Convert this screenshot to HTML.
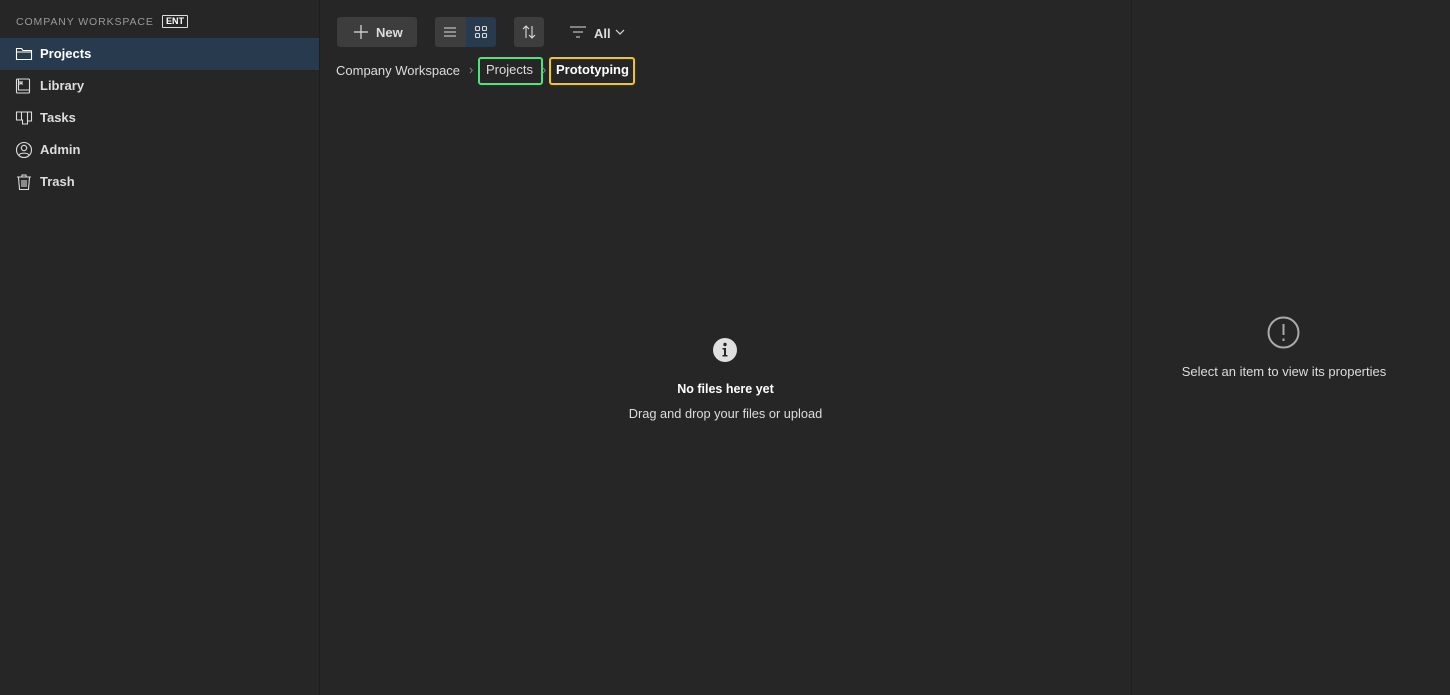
<!DOCTYPE html>
<html><head><style>
*{box-sizing:border-box;margin:0;padding:0}
body{width:1450px;height:695px;background:#262626;font-family:"Liberation Sans",sans-serif;color:#e6e6e6;position:relative;overflow:hidden}
.side{position:absolute;left:0;top:0;width:320px;height:695px;border-right:1px solid #1e1e1e;background:#262626}
.ws{position:absolute;left:16px;top:16px;font-size:10.5px;letter-spacing:0.9px;color:#9a9a9a}
.ent{position:absolute;left:162px;top:15px;border:1px solid #ddd;font-size:9px;font-weight:bold;color:#fff;padding:0 3px;line-height:11px;border-radius:1px}
.item{position:absolute;left:0;width:319px;height:32px;font-size:13px;font-weight:bold;color:#ddd}
.item span{position:absolute;left:40px;top:8px}
.item svg{position:absolute;left:15px;top:7px}
.act{background:#283a4d;color:#fff}
.right{position:absolute;left:1131px;top:0;width:319px;height:695px;border-left:1px solid #1f1f1f;background:#262626}
.btn{position:absolute;top:17px;height:30px;background:#3d3d3d;border-radius:3px}
.bc{position:absolute;top:62px;font-size:13px;color:#ddd;height:23px;line-height:15px}
</style></head><body>
<div class="side">
<div class="ws">COMPANY WORKSPACE</div><div class="ent">ENT</div>
<div class="item act" style="top:38px"><svg width="18" height="18" viewBox="0 0 18 18" fill="none" stroke="#fff" stroke-width="1.1"><path d="M1.5 3.5h5l1.5 2h8.5v9h-15z M1.5 7h15"/></svg><span>Projects</span></div>
<div class="item" style="top:70px"><svg width="18" height="18" viewBox="0 0 18 18" fill="none" stroke="#ddd" stroke-width="1.1"><rect x="1.5" y="2" width="13" height="14" rx="1"/><path d="M3.5 2v11h11M5 4v3l1-1 1 1V4"/></svg><span>Library</span></div>
<div class="item" style="top:102px"><svg width="18" height="18" viewBox="0 0 18 18" fill="none" stroke="#ddd" stroke-width="1.1"><path d="M1.5 3h15v9h-4v3h-5V11h-6zM6.5 3v8M12.5 3v9"/></svg><span>Tasks</span></div>
<div class="item" style="top:134px"><svg width="18" height="18" viewBox="0 0 18 18" fill="none" stroke="#ddd" stroke-width="1.1"><circle cx="9" cy="9" r="7.5"/><circle cx="9" cy="7" r="2.7"/><path d="M4 14c1.5-2.5 8.5-2.5 10 0"/></svg><span>Admin</span></div>
<div class="item" style="top:166px"><svg width="18" height="18" viewBox="0 0 18 18" fill="none" stroke="#ddd" stroke-width="1.1"><path d="M2 4h14M7 4V2h4v2M3.5 4l1 12.5h9l1-12.5M7 7v7M9 7v7M11 7v7"/></svg><span>Trash</span></div>
</div>

<div class="btn" style="left:337px;width:80px"><svg style="position:absolute;left:16px;top:7px" width="16" height="16" viewBox="0 0 16 16" stroke="#ddd" stroke-width="1.2"><path d="M8 1v14M1 8h14"/></svg><span style="position:absolute;left:39px;top:8px;font-size:13px;font-weight:bold;color:#ddd">New</span></div>
<div class="btn" style="left:435px;width:31px;border-radius:3px 0 0 3px"><svg style="position:absolute;left:8px;top:8px" width="14" height="14" viewBox="0 0 14 14" stroke="#ddd" stroke-width="1.1"><path d="M1 3h12M1 7h12M1 11h12"/></svg></div>
<div class="btn" style="left:466px;width:30px;background:#283a4d;border-radius:0 3px 3px 0"><svg style="position:absolute;left:8px;top:8px" width="14" height="14" viewBox="0 0 14 14" fill="none" stroke="#ddd" stroke-width="1.1"><rect x="1.5" y="1.5" width="4" height="4" rx="1"/><rect x="8.5" y="1.5" width="4" height="4" rx="1"/><rect x="1.5" y="8.5" width="4" height="4" rx="1"/><rect x="8.5" y="8.5" width="4" height="4" rx="1"/></svg></div>
<div class="btn" style="left:514px;width:30px"><svg style="position:absolute;left:6px;top:7px" width="18" height="16" viewBox="0 0 18 16" fill="none" stroke="#ddd" stroke-width="1.1"><path d="M6 14V2M3 5l3-3 3 3M12 2v12M9 11l3 3 3-3"/></svg></div>
<svg style="position:absolute;left:569px;top:25px" width="18" height="14" viewBox="0 0 18 14" stroke="#ddd" stroke-width="1.1"><path d="M1 2h16M4 7h10M7 12h4"/></svg>
<span style="position:absolute;left:594px;top:26px;font-size:13px;font-weight:bold;color:#ddd">All</span>
<svg style="position:absolute;left:615px;top:28px" width="10" height="8" viewBox="0 0 10 8" fill="none" stroke="#ddd" stroke-width="1.2"><path d="M1 2l4 4 4-4"/></svg>

<div class="bc" style="left:336px;top:63px">Company Workspace</div>
<span style="position:absolute;left:469px;top:62px;font-size:13px;color:#888">›</span>
<div class="bc" style="left:478px;top:57px;height:28px;width:65px;border:2px solid #4ee37c;border-radius:3px;padding:0 0 0 6px;line-height:22px">Projects</div>
<span style="position:absolute;left:542px;top:62px;font-size:13px;color:#888">›</span>
<div class="bc" style="left:549px;top:57px;height:28px;width:86px;border:2px solid #f2c80f;border-radius:3px;padding:0 0 0 5px;line-height:22px;font-weight:bold;color:#fff">Prototyping</div>

<svg style="position:absolute;left:713px;top:338px" width="24" height="24" viewBox="0 0 24 24"><circle cx="12" cy="12" r="12" fill="#e0e0e0"/><circle cx="12" cy="6.5" r="1.7" fill="#262626"/><path d="M9.5 10h3.5v7h1.5v1.5h-5V17h1.5v-5.5h-1.5z" fill="#262626"/></svg>
<div style="position:absolute;left:320px;width:811px;top:382px;text-align:center;font-size:12.5px;font-weight:bold;color:#fff">No files here yet</div>
<div style="position:absolute;left:320px;width:811px;top:406px;text-align:center;font-size:12.8px;color:#ddd">Drag and drop your files or upload</div>

<div class="right">
<svg style="position:absolute;left:135px;top:316px" width="33" height="33" viewBox="0 0 33 33" fill="none" stroke="#aaa" stroke-width="2"><circle cx="16.5" cy="16.5" r="15"/><path d="M16.5 8v11M16.5 22.5v2.5"/></svg>
<div style="position:absolute;left:0;width:304px;top:364px;text-align:center;font-size:13px;color:#ddd">Select an item to view its properties</div>
</div>
</body></html>
